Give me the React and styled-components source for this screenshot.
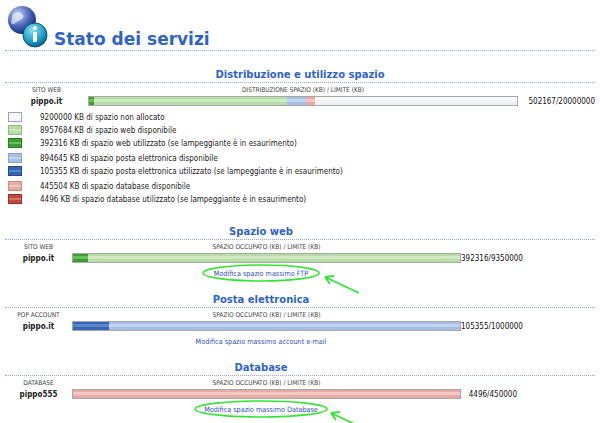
import styled, { createGlobalStyle } from 'styled-components';

const Global = createGlobalStyle`
  body { margin: 0; background: #fff; font-family: "DejaVu Sans Condensed", "DejaVu Sans", sans-serif; font-size: 8px; color: #222; }
`;

const Page = styled.div`
  width: 600px;
  height: 423px;
  overflow: hidden;
  padding: 0 5px;
  box-sizing: border-box;
`;

const Header = styled.div`
  display: flex;
  align-items: flex-end;
  gap: 3px;
  height: 50px;
  border-bottom: 1px dotted #8fa8d8;
`;

const Title = styled.h1`
  margin: 0 0 1px;
  font-family: "DejaVu Sans", sans-serif;
  font-weight: 600;
  font-size: 17px;
  color: #2f63c8;
`;

const Section = styled.div`
  width: ${p => p.$w || '100%'};
  margin-top: ${p => p.$mt || 0}px;
`;

const SectionTitle = styled.div`
  text-align: center;
  font-family: "DejaVu Sans", sans-serif;
  font-weight: bold;
  font-size: 10px;
  color: #2f63c8;
  padding-bottom: 2px;
`;

const Rule = styled.div`
  border-bottom: 1px dotted #8fa8d8;
`;

const Grid = styled.div`
  display: grid;
  grid-template-columns: ${p => p.$cols};
  align-items: center;
  row-gap: 2px;
  padding-top: 3px;
`;

const Cap = styled.div`
  font-size: 6.5px;
  color: #444;
  text-align: center;
`;

const Name = styled.div`
  font-weight: 600;
  font-size: 8px;
  text-align: center;
`;

const Value = styled.div`
  font-size: 8px;
  color: #111;
  text-align: right;
`;

const Track = styled.div`
  display: flex;
  height: 8px;
  border: 1px solid #a8a8a8;
  background: linear-gradient(#fafbfc, #e9edf2);
  overflow: hidden;
`;

const Seg = styled.div`
  background: linear-gradient(${p => p.$c} 0 30%, ${p => p.$l} 30% 60%, ${p => p.$c} 60%);
`;

const Legend = styled.div`
  display: flex;
  flex-direction: column;
  gap: 3px;
  padding: 6px 0 0 3px;
`;

const LegendRow = styled.div`
  display: flex;
  align-items: center;
  gap: 18px;
  height: 10px;
  margin-top: ${p => (p.$gap ? 2 : 0)}px;
`;

const Swatch = styled.div`
  width: 12px;
  height: 8px;
  border: 1px solid ${p => p.$b};
  background: linear-gradient(${p => p.$c} 0 40%, ${p => p.$l} 40% 60%, ${p => p.$c} 60%);
`;

const LinkRow = styled.div`
  position: relative;
  text-align: center;
  padding: 6px 0 0;
  height: 14px;
`;

const Link = styled.a`
  color: #2f4fb8;
  font-size: 7.2px;
  text-decoration: none;
`;

const Mark = styled.svg`
  position: absolute;
  left: 0;
  top: 0;
  overflow: visible;
`;

const C = {
  white: ['#f4f6f9', '#ffffff', '#9aa4b0'],
  lgreen: ['#b6dda4', '#cfe9c2', '#8fbf7b'],
  green: ['#3f9d33', '#6cc05b', '#2f7a24'],
  lblue: ['#a6bfe4', '#c2d4ef', '#8aa4cc'],
  blue: ['#3566b5', '#5b86cc', '#244c8c'],
  lred: ['#e7aaa5', '#f1c8c4', '#c98b86'],
  red: ['#c2483e', '#d9716a', '#9a3128'],
};

const legend = [
  ['white', '9200000 KB di spazio non allocato'],
  ['lgreen', '8957684 KB di spazio web disponibile'],
  ['green', '392316 KB di spazio web utilizzato (se lampeggiante è in esaurimento)'],
  ['lblue', '894645 KB di spazio posta elettronica disponibile', true],
  ['blue', '105355 KB di spazio posta elettronica utilizzato (se lampeggiante è in esaurimento)'],
  ['lred', '445504 KB di spazio database disponibile', true],
  ['red', '4496 KB di spazio database utilizzato (se lampeggiante è in esaurimento)'],
];

function Bar({ segs }) {
  return (
    <Track>
      {segs.map(([k, w], i) => (
        <Seg key={i} $c={C[k][0]} $l={C[k][1]} style={{ width: w }} />
      ))}
    </Track>
  );
}

function Logo() {
  return (
    <svg width="46" height="46" viewBox="0 0 46 46">
      <defs>
        <radialGradient id="g1" cx="35%" cy="30%" r="70%">
          <stop offset="0" stopColor="#c9d6f0" />
          <stop offset="0.6" stopColor="#4a67b8" />
          <stop offset="1" stopColor="#1c2f78" />
        </radialGradient>
        <radialGradient id="g2" cx="40%" cy="30%" r="70%">
          <stop offset="0" stopColor="#8ee0f2" />
          <stop offset="0.7" stopColor="#1b9ac6" />
          <stop offset="1" stopColor="#0b5f8a" />
        </radialGradient>
      </defs>
      <circle cx="17" cy="16" r="14" fill="url(#g1)" />
      <path d="M8 10c4-3 8-2 10 1s-3 5-6 7-4 3-6 1z" fill="#e8eef8" opacity="0.7" />
      <circle cx="30" cy="31" r="12" fill="url(#g2)" stroke="#0a5478" strokeWidth="1" />
      <circle cx="30" cy="24" r="2" fill="#fff" />
      <rect x="28" y="28" width="4" height="10" rx="1" fill="#fff" />
    </svg>
  );
}

function Ellipse({ x, y, w, h, ax }) {
  return (
    <Mark width="1" height="1">
      <ellipse cx={x} cy={y} rx={w} ry={h} fill="none" stroke="#33e633" strokeWidth="1.6" />
      <path d={`M${ax} ${y + 4} l34 16 M${ax} ${y + 4} l9 -1 M${ax} ${y + 4} l5 7`} stroke="#33e633" strokeWidth="1.8" fill="none" />
    </Mark>
  );
}

function Space({ title, cap, name, value, segs, link, mark, mt }) {
  return (
    <>
      <Section $w="512px" $mt={mt}>
        <SectionTitle>{title}</SectionTitle>
      </Section>
      <Rule />
      <Section $w="512px">
        <Grid $cols="67px 1fr 56px">
          <Cap>{cap}</Cap>
          <Cap>SPAZIO OCCUPATO (KB) / LIMITE (KB)</Cap>
          <div />
          <Name>{name}</Name>
          <Bar segs={segs} />
          <Value>{value}</Value>
        </Grid>
        <LinkRow>
          {mark && <Ellipse {...mark} />}
          <Link href="#">{link}</Link>
        </LinkRow>
      </Section>
    </>
  );
}

export default function App() {
  return (
    <Page>
      <Global />
      <Header>
        <Logo />
        <Title>Stato dei servizi</Title>
      </Header>
      <Section $mt={18}>
        <SectionTitle>Distribuzione e utilizzo spazio</SectionTitle>
      </Section>
      <Rule />
      <Grid $cols="83px 430px 1fr">
        <Cap>SITO WEB</Cap>
        <Cap>DISTRIBUZIONE SPAZIO (KB) / LIMITE (KB)</Cap>
        <div />
        <Name>pippo.it</Name>
        <Bar segs={[['green', '5px'], ['lgreen', '193px'], ['lblue', '19px'], ['lred', '9px']]} />
        <Value>502167/20000000</Value>
      </Grid>
      <Legend>
        {legend.map(([k, t, gap]) => (
          <LegendRow key={t} $gap={gap}>
            <Swatch $c={C[k][0]} $l={C[k][1]} $b={C[k][2]} />
            <span>{t}</span>
          </LegendRow>
        ))}
      </Legend>
      <Space
        mt={22}
        title="Spazio web"
        cap="SITO WEB"
        name="pippo.it"
        value="392316/9350000"
        segs={[['green', '16px'], ['lgreen', '100%']]}
        link="Modifica spazio massimo FTP"
        mark={{ x: 256, y: 10, w: 58, h: 8, ax: 320 }}
      />
      <Space
        mt={11}
        title="Posta elettronica"
        cap="POP ACCOUNT"
        name="pippo.it"
        value="105355/1000000"
        segs={[['blue', '40px'], ['lblue', '100%']]}
        link="Modifica spazio massimo account e-mail"
      />
      <Space
        mt={11}
        title="Database"
        cap="DATABASE"
        name="pippo555"
        value="4496/450000"
        segs={[['lred', '100%']]}
        link="Modifica spazio massimo Database"
        mark={{ x: 256, y: 10, w: 66, h: 8, ax: 326 }}
      />
    </Page>
  );
}
